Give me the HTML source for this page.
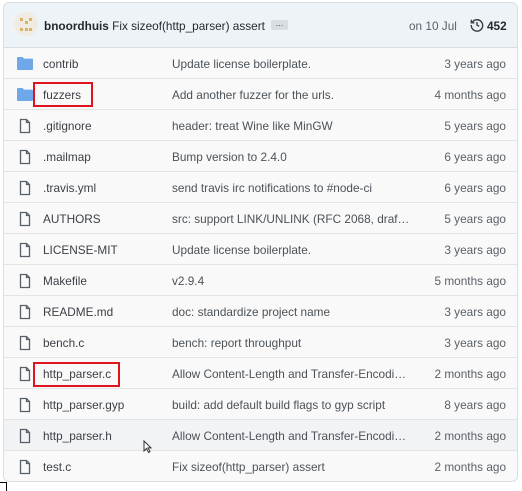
<!DOCTYPE html>
<html><head><style>
body{margin:0;width:522px;height:489px;background:#fff;font-family:"Liberation Sans",sans-serif;font-size:11.8px;color:#3a3f45;overflow:hidden;position:relative}
.box{position:absolute;left:3px;top:2px;width:513px;height:478px;border:1px solid #d8dee4;border-radius:6px;background:#f9f9f9;overflow:hidden}
.hdr{height:44px;background:#eef3f8;border-bottom:1px solid #d8dee4;position:relative}
.av{position:absolute;left:10px;top:9px;width:24px;height:24px;border-radius:50%;background:#f1ece2}
.av i{position:absolute;width:3px;height:3px;background:#d8b46a}
.row{height:30px;border-bottom:1px solid #e2e5e8;position:relative}
.row:last-child{border-bottom:none}
.row span{position:absolute;top:9px}
.n{left:39px}.m{left:168px;color:#4b5258}.t{right:11px;color:#5a6168}
.ic{position:absolute;left:13px;top:8px}
.red{position:absolute;border:2px solid #e0141e}
</style></head><body>
<div class="box">
<div class="hdr">
<div class="av"><i style="left:6px;top:6px"></i><i style="left:11px;top:9px"></i><i style="left:15px;top:6px"></i><i style="left:6px;top:16px"></i><i style="left:11px;top:16px"></i><i style="left:15px;top:16px"></i></div>
<span style="position:absolute;left:40px;top:16px;color:#24292f"><b>bnoordhuis</b> Fix sizeof(http_parser) assert</span>
<span style="position:absolute;left:267px;top:17px;width:17px;height:10px;background:#d8dde2;border-radius:2px;font-size:9px;line-height:6px;text-align:center;color:#555">...</span>
<span style="position:absolute;left:405px;top:16px;color:#5a6168">on 10 Jul</span>
<svg style="position:absolute;left:466px;top:15px" width="14" height="14" viewBox="0 0 16 16" fill="none" stroke="#3a3f45" stroke-width="1.6"><path d="M2.5 5A6.5 6.5 0 1 1 1.5 8"/><path d="M1.5 2v3.5H5"/><path d="M8 4.5V8l2.5 1.5"/></svg>
<b style="position:absolute;left:483px;top:16px;color:#24292f">452</b>
</div>
<div id="rows"></div>
</div>
<div class="red" style="left:33px;top:82px;width:56px;height:21px"></div>
<div class="red" style="left:33px;top:362px;width:83px;height:21px"></div>
<svg style="position:absolute;left:143px;top:440px" width="10" height="14" viewBox="0 0 10 14"><path d="M1 1v10l2.5-2.5 2 4 1.5-.8-2-3.8H8z" fill="#fff" stroke="#333"/></svg>
<div style="position:absolute;left:0;top:482px;width:6px;height:8px;border:1px solid #000;border-bottom:none;border-left:none"></div>
<script>
var F='<svg class="ic" width="16" height="14" viewBox="0 0 16 14"><path d="M0 2a1 1 0 0 1 1-1h4.5l1.5 1.6h8a1 1 0 0 1 1 1V13a1 1 0 0 1-1 1H1a1 1 0 0 1-1-1z" fill="#6fa8e8"/></svg>';
var D='<svg class="ic" width="16" height="16" viewBox="0 0 16 16" fill="none" stroke="#57606a" stroke-width="1.3"><path d="M3.5 1.5h6l3 3v10h-9z"/><path d="M9.5 1.5v3h3"/></svg>';
var r=[[1,"contrib","Update license boilerplate.","3 years ago"],[1,"fuzzers","Add another fuzzer for the urls.","4 months ago"],[0,".gitignore","header: treat Wine like MinGW","5 years ago"],[0,".mailmap","Bump version to 2.4.0","6 years ago"],[0,".travis.yml","send travis irc notifications to #node-ci","6 years ago"],[0,"AUTHORS","src: support LINK/UNLINK (RFC 2068, draf…","5 years ago"],[0,"LICENSE-MIT","Update license boilerplate.","3 years ago"],[0,"Makefile","v2.9.4","5 months ago"],[0,"README.md","doc: standardize project name","3 years ago"],[0,"bench.c","bench: report throughput","3 years ago"],[0,"http_parser.c","Allow Content-Length and Transfer-Encodi…","2 months ago"],[0,"http_parser.gyp","build: add default build flags to gyp script","8 years ago"],[0,"http_parser.h","Allow Content-Length and Transfer-Encodi…","2 months ago"],[0,"test.c","Fix sizeof(http_parser) assert","2 months ago"]];
var h='';r.forEach(function(x,i){h+='<div class="row"'+(i==12?' style="background:#f1f3f5"':'')+'>'+(x[0]?F:D)+'<span class="n">'+x[1]+'</span><span class="m">'+x[2]+'</span><span class="t">'+x[3]+'</span></div>'});
document.getElementById('rows').innerHTML=h;
</script>
</body></html>
